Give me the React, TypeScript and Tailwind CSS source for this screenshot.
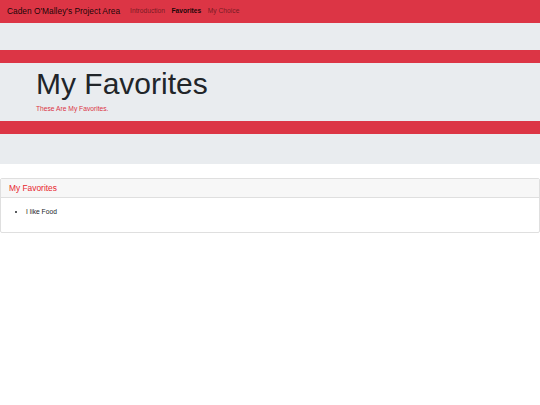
const navLinks = [
  { label: "Introduction", active: false },
  { label: "Favorites", active: true },
  { label: "My Choice", active: false },
];

const favorites = ["I like Food"];

export default function App() {
  return (
    <div className="min-h-[405px] bg-white font-['Liberation_Sans',Arial,sans-serif] text-[#212529]">
      <nav className="flex h-[23px] items-center bg-[#dc3545] px-[7px]">
        <a className="mr-[10px] text-[8.4px] leading-none text-black/90">Caden O'Malley's Project Area</a>
        <div className="flex items-center gap-[6.5px]">
          {navLinks.map(({ label, active }) => (
            <a
              key={label}
              className={
                active
                  ? "text-[6.7px] font-bold leading-none text-black/90"
                  : "text-[6.7px] leading-none text-black/50"
              }
            >
              {label}
            </a>
          ))}
        </div>
      </nav>

      <div className="bg-[#e9ecef] pt-[27px] pb-[30px]">
        <div className="border-y-[13px] border-[#dc3545] pl-[36px] pt-[3px] pb-[7px]">
          <h1 className="text-[30px] leading-[36px] font-light text-[#212529]">My Favorites</h1>
          <p className="mt-[2px] text-[6.7px] leading-[10px] text-[#dc3545]">These Are My Favorites.</p>
        </div>
      </div>

      <div className="mt-[14px] rounded-[2px] border border-[#dfdfdf]">
        <div className="flex h-[19px] items-center border-b border-[#dfdfdf] bg-[#f7f7f7] pl-[8px]">
          <h5 className="text-[8.4px] leading-none text-[#e8262f]">My Favorites</h5>
        </div>
        <div className="px-[9px] pt-[9px] pb-[15px]">
          <ul className="list-disc pl-[16px]">
            {favorites.map((item) => (
              <li key={item} className="text-[6.7px] leading-[10px] text-[#212529]">
                {item}
              </li>
            ))}
          </ul>
        </div>
      </div>
    </div>
  );
}
